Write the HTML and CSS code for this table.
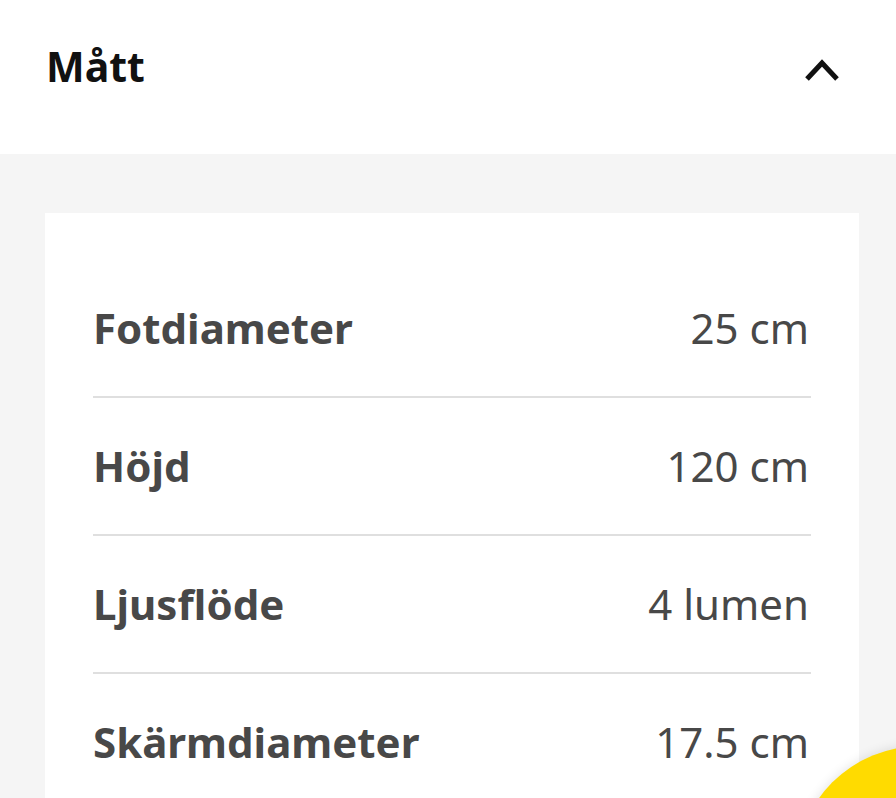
FILE: index.html
```html
<!DOCTYPE html>
<html lang="sv">
<head>
  <meta charset="UTF-8" />
  <meta name="viewport" content="width=device-width, initial-scale=1.0"/>
  <title>Mått</title>
  <link rel="stylesheet" href="styles.css">
</head>
<body>

  <header class="section-head">
    <h2>Mått</h2>
    <button class="toggle" aria-label="Stäng">
      <svg width="36" height="24" viewBox="0 0 36 24">
        <polyline points="3,21 18,5 33,21" fill="none" stroke="#111" stroke-width="5" />
      </svg>
    </button>
  </header>

  <main class="details">
    <div class="card">
      <div class="row">
        <span class="label">Fotdiameter</span>
        <span class="value">25 cm</span>
      </div>
      <div class="row">
        <span class="label">Höjd</span>
        <span class="value">120 cm</span>
      </div>
      <div class="row">
        <span class="label">Ljusflöde</span>
        <span class="value">4 lumen</span>
      </div>
      <div class="row">
        <span class="label">Skärmdiameter</span>
        <span class="value">17.5 cm</span>
      </div>
    </div>
  </main>

  <!-- floating cart button -->
  <div class="fab"></div>

</body>
</html>
```

FILE: styles.css
```css
html, body {
  height: 100%;
}

body {
  font-family: "Noto Sans", "Open Sans", sans-serif;
  background-color: #f5f5f5;
  margin: 0;
  padding: 0;
  overflow: hidden;
}

.section-head {
  background: white;
  height: 154px;
  box-sizing: border-box;
  padding: 0 56px 20px 46px;
  display: flex;
  align-items: center;
  justify-content: space-between;
}

.section-head h2 {
  margin: 0;
  font-size: 41px;
  font-weight: 700;
  color: #111;
  line-height: 1.2;
}

.toggle {
  background: none;
  border: none;
  padding: 0;
  margin-top: 5px;
  display: flex;
  cursor: pointer;
}

.details {
  padding: 59px 37px 0 45px;
}

.card {
  background: white;
  padding: 47px 48px 0;
}

.row {
  display: flex;
  justify-content: space-between;
  align-items: center;
  padding: 38px 0;
  line-height: 60px;
  font-size: 42px;
  color: #484848;
  border-bottom: 2px solid #dfdfdf;
}

.label {
  font-weight: 700;
}

.value {
  font-weight: 400;
  padding-right: 2px;
}

.fab {
  position: fixed;
  left: 796px;
  top: 746px;
  width: 248px;
  height: 248px;
  border-radius: 50%;
  background: #ffdb00;
  box-shadow: 0 0 12px rgba(0,0,0,0.12);
}
```
